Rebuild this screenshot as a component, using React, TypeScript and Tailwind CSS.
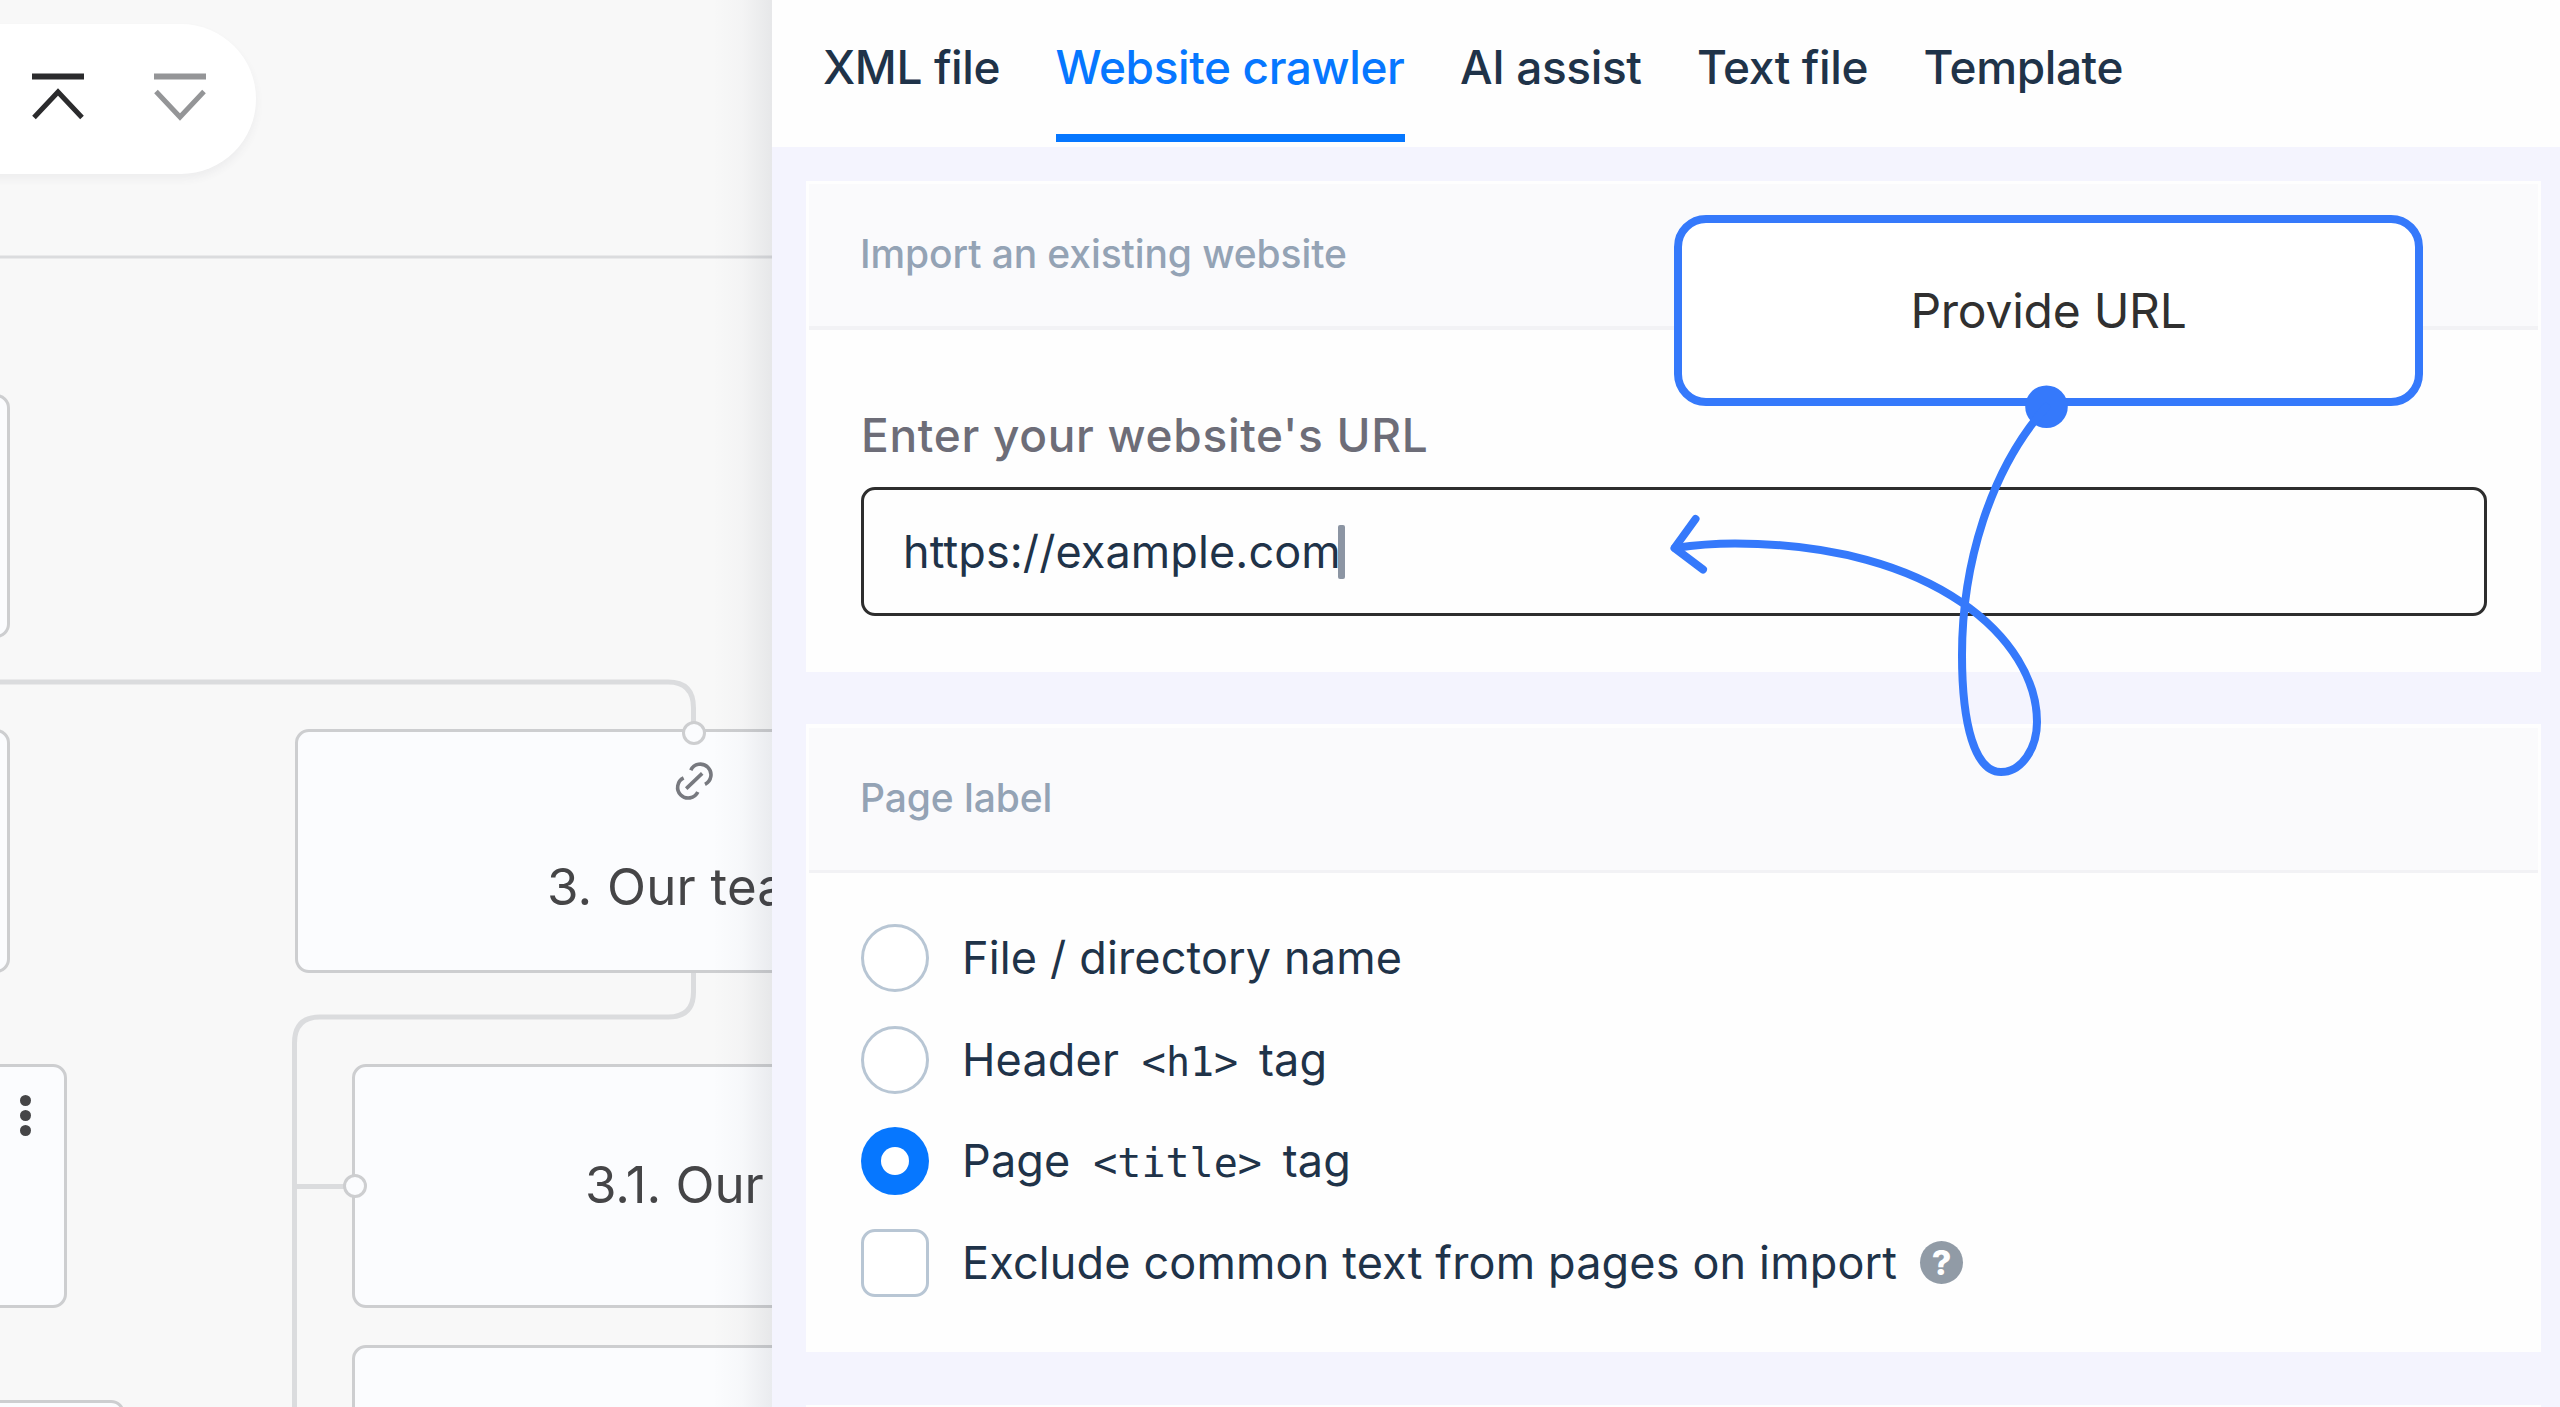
import { useState } from 'react';

const tabs = ['XML file', 'Website crawler', 'AI assist', 'Text file', 'Template'];

function CollapseIcon() {
  return (
    <svg className="h-[50px] w-[56px] text-[#2b2b2d]" viewBox="0 0 56 50" fill="none" stroke="currentColor">
      <path d="M2 4.5h52" strokeWidth={6} />
      <path d="M4 45.5L28 20L52 45.5" strokeWidth={5} />
    </svg>
  );
}

function ExpandIcon() {
  return (
    <svg className="h-[50px] w-[56px] text-[#949597]" viewBox="0 0 56 50" fill="none" stroke="currentColor">
      <path d="M2 4.5h52" strokeWidth={6} />
      <path d="M4 19.5L28 45L52 19.5" strokeWidth={5} />
    </svg>
  );
}

function LinkIcon() {
  return (
    <svg className="h-[40px] w-[40px] text-[#77797f]" viewBox="0 0 40 40" fill="none" stroke="currentColor" strokeWidth={3.6}>
      <path d="M16.8 8.2A10.6 10.6 0 1 1 31 22.3" />
      <path d="M9.6 15.9A10.6 10.6 0 1 0 23.8 30" />
      <path d="M12.2 26.6L28.2 11.4" />
    </svg>
  );
}

// Connector lines of the sitemap tree
function Connectors() {
  return (
    <svg className="absolute inset-0 h-[1407px] w-[772px]" viewBox="0 0 772 1407" fill="none" stroke="#dbdcde" strokeWidth={5}>
      <path d="M0 257H772" strokeWidth={3} />
      <path d="M0 682H668Q693.5 682 693.5 708V732" />
      <path d="M693.5 970V992Q693.5 1017 668 1017H320Q294.5 1017 294.5 1043V1407" />
      <path d="M294.5 1186.5H355" />
    </svg>
  );
}

function Canvas() {
  const node = 'absolute h-[244px] rounded-[14px] border-[3px] border-[#cdced0] bg-[#fbfcfe]';
  const port = 'absolute h-6 w-6 rounded-full border-[3px] border-[#cdced0] bg-[#fbfcfe]';

  return (
    <div className="relative h-full w-[772px] shrink-0 overflow-hidden bg-[#f8f8f8]">
      <Connectors />

      <div className="absolute -left-20 top-[24px] flex h-[150px] w-[336px] items-center justify-end gap-[66px] rounded-full bg-white pb-[5px] pr-[48px] shadow-[0_5px_8px_rgba(60,60,90,0.06)]">
        <CollapseIcon />
        <ExpandIcon />
      </div>

      <div className={`${node} -left-[390px] top-[394px] w-[400px]`} />
      <div className={`${node} -left-[390px] top-[729px] w-[400px]`} />

      <div className={`${node} left-[295px] top-[729px] flex w-[797px] flex-col items-center pt-[30px]`}>
        <LinkIcon />
      </div>
      <span className="absolute left-[547px] top-[856px] whitespace-nowrap text-[51px] leading-[62px] tracking-[0.2px] text-[#454547]">3. Our team</span>
      <div className={`${port} left-[682px] top-[721px]`} />

      <div className={`${node} -left-[333px] top-[1064px] w-[400px]`} />
      <div className="absolute left-[20px] top-[1095px] flex flex-col gap-[4.5px]">
        <span className="h-[10.5px] w-[10.5px] rounded-full bg-[#454547]" />
        <span className="h-[10.5px] w-[10.5px] rounded-full bg-[#454547]" />
        <span className="h-[10.5px] w-[10.5px] rounded-full bg-[#454547]" />
      </div>

      <div className={`${node} left-[352px] top-[1064px] w-[797px]`} />
      <span className="absolute left-[585px] top-[1154px] whitespace-nowrap text-[51px] leading-[62px] text-[#454547]">3.1. Our mission</span>
      <div className={`${port} left-[343px] top-[1174px]`} />

      <div className={`${node} left-[352px] top-[1345px] w-[797px]`} />
      <div className={`${node} -left-[275px] top-[1400px] w-[400px]`} />

      {/* Panel shadow */}
      <div className="absolute inset-y-0 right-0 w-[60px] bg-linear-to-r from-[#1e283c]/0 via-[#1e283c]/2 to-[#1e283c]/8" />
    </div>
  );
}

function CardHeader({ children }: { children: React.ReactNode }) {
  return (
    <div className="pb-[3px] pl-[51px] text-[39px] font-medium leading-[48px] tracking-[-0.1px] text-[#94a3b5]">
      {children}
    </div>
  );
}

function Radio({ checked, onChange }: { checked: boolean; onChange: () => void }) {
  return (
    <button
      onClick={onChange}
      className={
        checked
          ? 'flex h-[68px] w-[68px] items-center justify-center rounded-full bg-[#0677ff]'
          : 'h-[68px] w-[68px] rounded-full border-[3px] border-[#b8c6d4] bg-white'
      }
    >
      {checked && <span className="h-7 w-7 rounded-full bg-white" />}
    </button>
  );
}

function Panel() {
  const [tab, setTab] = useState('Website crawler');
  const [label, setLabel] = useState('title');
  const row = 'flex h-[68px] items-center gap-[33px]';

  return (
    <div className="flex h-full flex-1 flex-col bg-[#f4f4fe] text-[#1f3349]">
      <div className="flex h-[147px] shrink-0 gap-[55.5px] bg-[#fefefe] pl-[51px] text-[46px] font-medium tracking-[-0.4px]">
        {tabs.map((t) => (
          <button
            key={t}
            onClick={() => setTab(t)}
            className={
              t === tab
                ? 'h-[142px] whitespace-nowrap border-b-8 border-[#0677ff] text-[#0677ff]'
                : 'h-[142px] whitespace-nowrap border-b-8 border-transparent'
            }
          >
            {t}
          </button>
        ))}
      </div>

      <div className="ml-[34px] mt-[34px] h-[491px] w-[1735px] shrink-0 bg-[#fefefe] px-[3px] pt-[3px]">
        <div className="flex h-[146px] flex-col justify-center border-b-4 border-[#f2f2f5] bg-[#fafafc]">
          <CardHeader>Import an existing website</CardHeader>
        </div>
        <div className="pl-[52px] pt-[76px]">
          <label className="block text-[46px] font-medium leading-[58px] tracking-[0.7px] text-[#6d6d78]">Enter your website's URL</label>
          <div className="mt-[23px] flex h-[129px] w-[1626px] items-center rounded-[14px] border-[3px] border-[#2d2d2d] pl-[39px] text-[45px] font-normal tracking-[0.1px]">
            <span>https://example.com</span>
            <span className="-ml-[3px] h-[54px] w-[7px] rounded-[2px] bg-[#8c95a3]" />
          </div>
        </div>
      </div>

      <div className="ml-[34px] mt-[52px] h-[628px] w-[1735px] shrink-0 bg-[#fefefe] px-[3px] pt-[4px]">
        <div className="flex h-[145px] flex-col justify-center border-b-[3px] border-[#f2f2f5] bg-[#fafafc]">
          <CardHeader>Page label</CardHeader>
        </div>
        <div className="flex flex-col gap-[33.5px] pl-[52px] pt-[51px] text-[45px] tracking-[0.15px]">
          <div className={row}>
            <Radio checked={label === 'file'} onChange={() => setLabel('file')} />
            <span>File / directory name</span>
          </div>
          <div className={row}>
            <Radio checked={label === 'h1'} onChange={() => setLabel('h1')} />
            <span>
              Header <code className="ml-[10px] mr-[8px] font-['DejaVu_Sans_Mono',monospace] text-[40px] tracking-normal">&lt;h1&gt;</code> tag
            </span>
          </div>
          <div className={row}>
            <Radio checked={label === 'title'} onChange={() => setLabel('title')} />
            <span>
              Page <code className="ml-[10px] mr-[8px] font-['DejaVu_Sans_Mono',monospace] text-[40px] tracking-normal">&lt;title&gt;</code> tag
            </span>
          </div>
          <div className={row}>
            <span className="h-[68px] w-[68px] rounded-[14px] border-[3px] border-[#b8c6d4] bg-white" />
            <span>Exclude common text from pages on import</span>
            <span className="-ml-[10px] flex h-[43px] w-[43px] items-center justify-center rounded-full bg-[#919ba6] text-[34px] font-extrabold text-white">?</span>
          </div>
        </div>
      </div>

      <div className="ml-[34px] mt-[53px] h-[100px] w-[1735px] shrink-0 bg-[#fefefe]" />
    </div>
  );
}

// Hint that floats over the panel, with its arrow to the input
function Callout() {
  return (
    <>
      <div className="absolute left-[1674px] top-[215px] flex h-[191px] w-[749px] items-center justify-center rounded-[32px] border-[8px] border-[#3579fb] bg-white text-[48px] tracking-[-0.25px] text-[#303030]">
        Provide URL
      </div>
      <svg className="absolute left-[1660px] top-[380px] h-[410px] w-[420px]" viewBox="1660 380 420 410" fill="none" stroke="#3579fb" strokeWidth={8} strokeLinecap="round" strokeLinejoin="round">
        <circle cx={2046.5} cy={406.7} r={21.3} fill="#3579fb" stroke="none" />
        <path d="M2046 407C1990 470 1962 565 1962 655C1962 725 1975 772 2001 772C2022 772 2037 748 2037 722C2037 640 1935 543.5 1735 543.5C1715 543.5 1695 545 1675 548" />
        <path d="M1695.5 519L1674.5 548L1703 569.5" />
      </svg>
    </>
  );
}

export default function App() {
  return (
    <div className="relative flex h-[1407px] w-[2560px] overflow-hidden font-['Inter',sans-serif]">
      <Canvas />
      <Panel />
      <Callout />
    </div>
  );
}
